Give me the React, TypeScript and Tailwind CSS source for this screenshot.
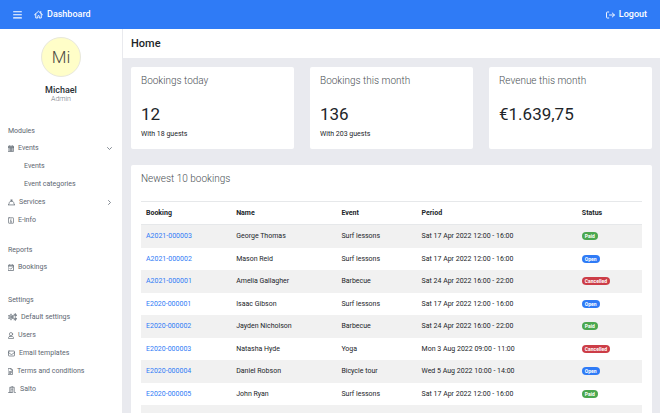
import React from "react";

type IconProps = { className: string };

function Svg({ className, box, width = 1.3, children }: { className: string; box: string; width?: number; children: React.ReactNode }) {
  return (
    <svg aria-hidden="true" className={`shrink-0 ${className}`} viewBox={box} fill="none" stroke="currentColor" strokeWidth={width} strokeLinecap="round" strokeLinejoin="round">
      {children}
    </svg>
  );
}

const MenuIcon = ({ className }: IconProps) => (
  <Svg className={className} box="0 0 16 16" width={1.8}>
    <path d="M1 3h14M1 8.5h14M1 14h14" />
  </Svg>
);
const HomeIcon = ({ className }: IconProps) => (
  <Svg className={className} box="0 0 18 16" width={1.8}>
    <path d="M1 8.5 9 1.5l8 7M3.500 7v8h4v-3.500a1.500 1.500 0 0 1 3 0V15h4V7M13.500 2v3" />
  </Svg>
);
const LogoutIcon = ({ className }: IconProps) => (
  <Svg className={className} box="0 0 18 16" width={1.8}>
    <path d="M5.500 2h-3A1.500 1.500 0 0 0 1 3.500v9A1.500 1.500 0 0 0 2.500 14h3M7 8h9.500M12.500 4 17 8l-4.500 4" />
  </Svg>
);
const CalendarIcon = ({ className }: IconProps) => (
  <Svg className={className} box="0 0 12 14" width={1.3}>
    <path d="M1 2.500h10v10.500H1zM1 5h10M3.500 1v1.500M8.500 1v1.500M3 7.500h6M3 10.300h6M4.500 6v6M7.500 6v6" />
    <path d="M1 3.800h10" />
  </Svg>
);
const BellIcon = ({ className }: IconProps) => (
  <Svg className={className} box="0 0 16 16" width={1.6}>
    <path d="M1 13.500h14M1.500 13C2.500 11.500 2.500 9.500 3 8c.6-1.900 2-3 4-3h2c2 0 3.400 1.100 4 3 .5 1.500.5 3.500 1.500 5M8 5V2.500M6 2.500h4" />
  </Svg>
);
const InfoIcon = ({ className }: IconProps) => (
  <Svg className={className} box="0 0 12 14" width={1.3}>
    <rect x="1" y="1.500" width="10" height="11" rx="1" />
    <path d="M6 4v.5M5 6.500h1V10M4.500 10h3" />
  </Svg>
);
const CheckCalendarIcon = ({ className }: IconProps) => (
  <Svg className={className} box="0 0 12 14" width={1.4}>
    <path d="M1 2.500h10V13H1zM1 4.200h10M3.500 1v1.500M8.500 1v1.500M3.500 8.500l1.800 1.800L8.800 7" />
  </Svg>
);
const CogsIcon = ({ className }: IconProps) => (
  <Svg className={className} box="0 0 18 16" width={1.4}>
    <circle cx="6" cy="8" r="1.700" />
    <circle cx="6" cy="8" r="4.200" />
    <path d="M6 2.200v1.500M6 12.300v1.500M1 5.100l1.300.8M9.700 10.100l1.300.8M1 10.900l1.300-.8M9.700 5.900l1.300-.8" />
    <circle cx="14.500" cy="4" r="1.500" />
    <circle cx="14.500" cy="12" r="1.500" />
    <path d="M14.500 1v1M14.500 6v1M12 3l.8.400M16.300 4.800l.8.400M14.500 9v1M14.500 14v1M12 13l.8-.4M16.300 11.200l.8-.4" />
  </Svg>
);
const UserIcon = ({ className }: IconProps) => (
  <Svg className={className} box="0 0 12 14" width={1.3}>
    <circle cx="6" cy="4.200" r="3.200" />
    <path d="M3.500 8.800C1.800 9.100 1 10.200 1 11.700V13h10v-1.300c0-1.500-.8-2.600-2.500-2.900-1.300.6-3.700.6-5 0z" />
  </Svg>
);
const MailIcon = ({ className }: IconProps) => (
  <Svg className={className} box="0 0 14 14" width={1.4}>
    <rect x="1" y="2" width="12" height="10" rx="1" />
    <path d="m1 5 4.800 3.500c.8.600 1.600.6 2.400 0L13 5" />
  </Svg>
);
const FileIcon = ({ className }: IconProps) => (
  <Svg className={className} box="0 0 10 14" width={1.3}>
    <path d="M1 1h5l3 3v9H1zM6 1v3h3M3 7h4M3 9h4M3 11h2.500" />
  </Svg>
);
const DoorIcon = ({ className }: IconProps) => (
  <Svg className={className} box="0 0 16 14" width={1.3}>
    <path d="M1 13h2.500V2.500H6M3.500 13h6V1L6 2v11M9.500 2.500h3V13H15M8 6.800v.6" />
  </Svg>
);
const Chevron = ({ open }: { open: boolean }) => (
  <Svg className="size-[5px]" box="0 0 10 10" width={1.5}>
    <path d={open ? "M1 3l4 4 4-4" : "M3 1l4 4-4 4"} />
  </Svg>
);

type Item = { label: string; icon: React.ReactNode; open?: boolean; children?: string[] };
type Section = { title: string; space: string; items: Item[] };

const sections: Section[] = [
  {
    title: "Modules",
    space: "mt-[19px]",
    items: [
      { label: "Events", icon: <CalendarIcon className="h-[7px] w-[6px]" />, open: true, children: ["Events", "Event categories"] },
      { label: "Services", icon: <BellIcon className="size-[7px]" />, open: false },
      { label: "E-info", icon: <InfoIcon className="h-[7px] w-[6px]" /> },
    ],
  },
  {
    title: "Reports",
    space: "mt-[13px]",
    items: [{ label: "Bookings", icon: <CheckCalendarIcon className="h-[7px] w-[6px]" /> }],
  },
  {
    title: "Settings",
    space: "mt-4",
    items: [
      { label: "Default settings", icon: <CogsIcon className="h-[8px] w-[9px]" /> },
      { label: "Users", icon: <UserIcon className="h-[7px] w-[6px]" /> },
      { label: "Email templates", icon: <MailIcon className="size-[7px]" /> },
      { label: "Terms and conditions", icon: <FileIcon className="h-[7px] w-[5px]" /> },
      { label: "Salto", icon: <DoorIcon className="h-[7px] w-[8px]" /> },
    ],
  },
];

const stats = [
  { title: "Bookings today", value: "12", note: "With 18 guests" },
  { title: "Bookings this month", value: "136", note: "With 203 guests" },
  { title: "Revenue this month", value: "€1.639,75", note: "" },
];

type Status = "Paid" | "Open" | "Cancelled";
const statusColors: Record<Status, string> = {
  Paid: "bg-[#4aa74e]",
  Open: "bg-[#2f7bf6]",
  Cancelled: "bg-[#cc3d47]",
};

const bookings: [string, string, string, string, Status][] = [
  ["A2021-000003", "George Thomas", "Surf lessons", "Sat 17 Apr 2022 12:00 - 16:00", "Paid"],
  ["A2021-000002", "Mason Reid", "Surf lessons", "Sat 17 Apr 2022 12:00 - 16:00", "Open"],
  ["A2021-000001", "Amelia Gallagher", "Barbecue", "Sat 24 Apr 2022 16:00 - 22:00", "Cancelled"],
  ["E2020-000001", "Isaac Gibson", "Surf lessons", "Sat 17 Apr 2022 12:00 - 16:00", "Open"],
  ["E2020-000002", "Jayden Nicholson", "Barbecue", "Sat 24 Apr 2022 16:00 - 22:00", "Paid"],
  ["E2020-000003", "Natasha Hyde", "Yoga", "Mon 3 Aug 2022 09:00 - 11:00", "Cancelled"],
  ["E2020-000004", "Daniel Robson", "Bicycle tour", "Wed 5 Aug 2022 10:00 - 14:00", "Open"],
  ["E2020-000005", "John Ryan", "Surf lessons", "Sat 17 Apr 2022 12:00 - 16:00", "Paid"],
];

function Sidebar() {
  return (
    <aside className="w-[123px] shrink-0 overflow-hidden border-r border-[#e9eaee] bg-white text-[7px] leading-[18px] text-[#5c6670]">
      <div className="flex flex-col items-center pt-2">
        <div className="flex size-10 items-center justify-center rounded-full border border-[#e8e8dc] bg-[#fffec8] text-[17px] font-light text-[#4a4a42]">Mi</div>
        <div className="mt-2 text-[9px] leading-[10px] font-medium text-[#2b3036]">Michael</div>
        <div className="text-[7px] leading-[9px] font-light text-[#6c757d]">Admin</div>
      </div>
      <nav className="pr-2.5 pl-2">
        {sections.map((s) => (
          <section key={s.title} className={s.space}>
            <h2 className="leading-4">{s.title}</h2>
            <ul>
              {s.items.map((it) => (
                <li key={it.label}>
                  {it.open === undefined ? (
                    <a href="#" className="flex items-center gap-1">
                      {it.icon}
                      <span>{it.label}</span>
                    </a>
                  ) : (
                    <button type="button" aria-expanded={it.open} className="flex w-full items-center gap-1 text-left">
                      {it.icon}
                      <span className="flex-1">{it.label}</span>
                      <Chevron open={it.open} />
                    </button>
                  )}
                  {it.children && (
                    <ul className="pl-4">
                      {it.children.map((c) => (
                        <li key={c}>
                          <a href="#" className="block">{c}</a>
                        </li>
                      ))}
                    </ul>
                  )}
                </li>
              ))}
            </ul>
          </section>
        ))}
      </nav>
    </aside>
  );
}

export default function App() {
  return (
    <div className="flex h-screen flex-col overflow-hidden bg-white font-['Roboto',sans-serif] text-[#212529]">
      <header className="flex h-[29px] shrink-0 items-center justify-between bg-[#2f7bf6] pr-[13px] pl-[13px] text-[9px] font-medium text-white">
        <div className="flex items-center gap-3">
          <button type="button" aria-label="Toggle menu">
            <MenuIcon className="size-[9px]" />
          </button>
          <a href="#" className="flex items-center gap-1">
            <HomeIcon className="h-[9px] w-[9px]" />
            Dashboard
          </a>
        </div>
        <a href="#" className="flex items-center gap-1">
          <LogoutIcon className="h-[8px] w-[9px]" />
          Logout
        </a>
      </header>
      <div className="flex min-h-0 flex-1">
        <Sidebar />
        <main className="min-w-0 flex-1 overflow-y-auto bg-[#e9eaef] [scrollbar-width:none]">
          <div className="flex h-[29px] items-center bg-white px-2">
            <h1 className="text-[11px] leading-4 font-medium">Home</h1>
          </div>
          <div className="flex flex-col gap-4 px-2 pt-[9px] pb-4">
            <div className="grid grid-cols-3 gap-4">
              {stats.map((s) => (
                <section key={s.title} className="h-[82px] rounded-xs bg-white px-2.5 pt-1.5">
                  <h2 className="text-[10px] leading-4 font-light text-[#4a4f54]">{s.title}</h2>
                  <p className="mt-[14px] text-[17px] leading-[22px]">{s.value}</p>
                  <p className="mt-1 text-[7px] leading-[10px]">{s.note}</p>
                </section>
              ))}
            </div>
            <section className="rounded-xs bg-white px-2.5 pt-1.5 pb-2.5">
              <h2 className="text-[10px] leading-4 font-light text-[#4a4f54]">Newest 10 bookings</h2>
              <table className="mt-[14px] w-full table-fixed border-collapse text-left text-[7px] leading-[10px]">
                <thead>
                  <tr className="h-[23px] border-y border-[#e6e8ea]">
                    <th className="w-[18%] px-[5px] font-bold">Booking</th>
                    <th className="w-[21%] px-[5px] font-bold">Name</th>
                    <th className="w-[16%] px-[5px] font-bold">Event</th>
                    <th className="w-[32%] px-[5px] font-bold">Period</th>
                    <th className="px-[5px] font-bold">Status</th>
                  </tr>
                </thead>
                <tbody>
                  {bookings.map(([id, name, event, period, status]) => (
                    <tr key={id} className="h-[22px] odd:h-[23px] odd:bg-[#f1f1f1]">
                      <td className="px-[5px]">
                        <a href="#" className="text-[#2f7bf6]">{id}</a>
                      </td>
                      <td className="px-[5px]">{name}</td>
                      <td className="px-[5px]">{event}</td>
                      <td className="px-[5px]">{period}</td>
                      <td className="px-[5px]">
                        <span className={`flex h-2 w-fit items-center rounded-full px-[3px] text-[5px] leading-[8px] font-bold text-white ${statusColors[status]}`}>{status}</span>
                      </td>
                    </tr>
                  ))}
                  <tr className="h-[22px] odd:h-[23px] odd:bg-[#f1f1f1]">
                    <td colSpan={5} />
                  </tr>
                </tbody>
              </table>
            </section>
          </div>
        </main>
      </div>
    </div>
  );
}
